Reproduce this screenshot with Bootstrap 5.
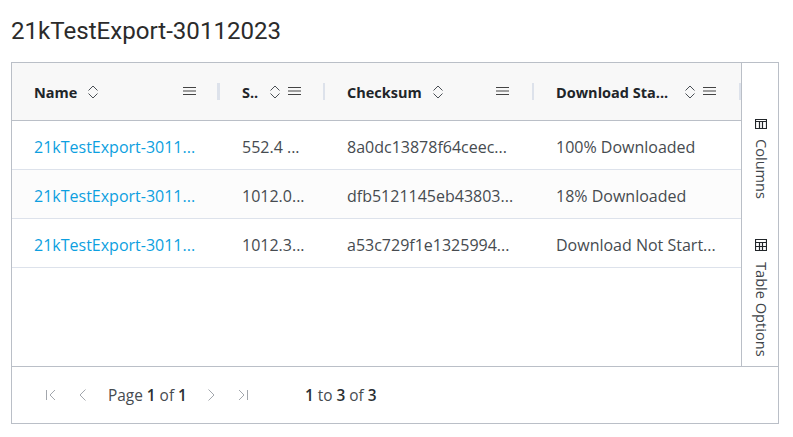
<!DOCTYPE html>
<html lang="en">
<head>
  <meta charset="UTF-8">
  <meta name="viewport" content="width=device-width, initial-scale=1.0">
  <title>21kTestExport-30112023</title>
  <link href="https://cdn.jsdelivr.net/npm/bootstrap@5.3.0/dist/css/bootstrap.min.css" rel="stylesheet">
  <style>
    body { background: #fff; color: #464b50; font-family: "Open Sans", "Noto Sans", sans-serif; }
    .page-wrap { padding: 16px 14px 13px 11px; }
    .page-title { font-family: Roboto, sans-serif; font-size: 24.1px; font-weight: 400; line-height: 30px; margin: 0 0 16px; color: #2b2b2b; }
    .grid-box { border: 1px solid #babfc7; height: 362px; }
    .grid-main { height: 304px; border-bottom: 1px solid #babfc7; }
    .grid-cols { width: 729px; overflow: hidden; }
    .grid-head { height: 58px; background: #f8f8f8; border-bottom: 1px solid #babfc7; }
    .grid-row { height: 49px; border-bottom: 1px solid #dde2eb; font-size: 16px; }
    .grid-row.odd { background: #fcfcfc; }
    .col-name { width: 208px; }
    .col-size { width: 105px; }
    .col-sum { width: 209px; }
    .col-status { width: 207px; }
    .cell { padding: 4px 0 0 22px; white-space: nowrap; line-height: 44px; flex: none; }
    .cell a { color: #0d9fe0; text-decoration: none; }
    .head-cell { padding: 1px 24px 0 22px; height: 57px; position: relative; flex: none; font-size: 14.5px; font-weight: 700; color: #212529; }
    .head-cell:nth-child(n+3) { padding-right: 25px; }
    .head-cell::after { content: ""; position: absolute; right: 0; top: 20px; width: 2px; height: 17px; background: #dde2eb; }
    .head-cell:first-child::after { width: 3px; }
    .head-label { white-space: nowrap; padding-top: 2px; }
    .sort-icon { flex: none; margin-left: 10px; }
    .menu-icon { flex: none; margin-bottom: 3px; }
    .menu-near { margin-left: 7px; }
    .side-bar { width: 37px; border-left: 1px solid #babfc7; padding-top: 55px; font-size: 14.6px; color: #40454a; }
    .side-tab { writing-mode: vertical-lr; white-space: nowrap; line-height: 24px; gap: 9px; width: 100%; }
    .side-tab + .side-tab { margin-top: 40px; gap: 11px; }
    .side-tab svg { writing-mode: horizontal-tb; margin-left: 2px; }
    .side-tab span { margin-left: 4px; }
    .grid-foot { height: 56px; padding-left: 31px; font-size: 15.4px; }
    .grid-foot span { padding-top: 2px; }
    .page-icon { width: 16px; height: 16px; color: #a3a7ad; flex: none; }
    .pager-text { margin: 0 16px 0 17px; }
    .row-count { margin-left: 54px; }
    .grid-foot b { font-weight: 600; color: #2b2f33; }
  </style>
</head>
<body>
  <div class="page-wrap">
    <h1 class="page-title">21kTestExport-30112023</h1>
    <div class="grid-box">
      <div class="grid-main d-flex">
        <div class="grid-cols flex-shrink-0">
          <div class="grid-head d-flex">
            <div class="head-cell col-name d-flex align-items-center">
              <span class="head-label">Name</span>
              <svg class="sort-icon" width="12" height="16" viewBox="0 0 12 16" fill="none" stroke="#4a4f55"><path d="M1.500 6.500 6 2l4.500 4.500M1.500 9.500 6 14l4.500-4.500"/></svg>
              <svg class="menu-icon ms-auto" width="13" height="10" viewBox="0 0 13 10" stroke="#444"><path d="M0 1.500h13M0 5h13M0 8.500h13"/></svg>
            </div>
            <div class="head-cell col-size d-flex align-items-center">
              <span class="head-label">S..</span>
              <svg class="sort-icon ms-auto" width="12" height="16" viewBox="0 0 12 16" fill="none" stroke="#4a4f55"><path d="M1.500 6.500 6 2l4.500 4.500M1.500 9.500 6 14l4.500-4.500"/></svg>
              <svg class="menu-icon menu-near" width="13" height="10" viewBox="0 0 13 10" stroke="#444"><path d="M0 1.500h13M0 5h13M0 8.500h13"/></svg>
            </div>
            <div class="head-cell col-sum d-flex align-items-center">
              <span class="head-label">Checksum</span>
              <svg class="sort-icon" width="12" height="16" viewBox="0 0 12 16" fill="none" stroke="#4a4f55"><path d="M1.500 6.500 6 2l4.500 4.500M1.500 9.500 6 14l4.500-4.500"/></svg>
              <svg class="menu-icon ms-auto" width="13" height="10" viewBox="0 0 13 10" stroke="#444"><path d="M0 1.500h13M0 5h13M0 8.500h13"/></svg>
            </div>
            <div class="head-cell col-status d-flex align-items-center">
              <span class="head-label">Download Sta...</span>
              <svg class="sort-icon ms-auto" width="12" height="16" viewBox="0 0 12 16" fill="none" stroke="#4a4f55"><path d="M1.500 6.500 6 2l4.500 4.500M1.500 9.500 6 14l4.500-4.500"/></svg>
              <svg class="menu-icon menu-near" width="13" height="10" viewBox="0 0 13 10" stroke="#444"><path d="M0 1.500h13M0 5h13M0 8.500h13"/></svg>
            </div>
          </div>
          <div class="grid-row d-flex">
            <div class="cell col-name"><a href="#">21kTestExport-3011...</a></div>
            <div class="cell col-size">552.4 ...</div>
            <div class="cell col-sum">8a0dc13878f64ceec...</div>
            <div class="cell col-status">100% Downloaded</div>
          </div>
          <div class="grid-row odd d-flex">
            <div class="cell col-name"><a href="#">21kTestExport-3011...</a></div>
            <div class="cell col-size">1012.0...</div>
            <div class="cell col-sum">dfb5121145eb43803...</div>
            <div class="cell col-status">18% Downloaded</div>
          </div>
          <div class="grid-row d-flex">
            <div class="cell col-name"><a href="#">21kTestExport-3011...</a></div>
            <div class="cell col-size">1012.3...</div>
            <div class="cell col-sum">a53c729f1e1325994...</div>
            <div class="cell col-status">Download Not Start...</div>
          </div>
        </div>
        <div class="side-bar d-flex flex-column">
          <div class="side-tab d-flex align-items-center">
            <svg width="12" height="12" viewBox="0 0 12 12" fill="none" stroke="#212529" stroke-width="1.200"><path d="M.5 1.500h11v9H.5zM.5 3.500h11M4.500 3.500v7M7.500 3.500v7"/></svg>
            <span>Columns</span>
          </div>
          <div class="side-tab d-flex align-items-center">
            <svg width="12" height="12" viewBox="0 0 12 12" fill="none" stroke="#212529" stroke-width="1.200"><path d="M.5.5h11v11H.5zM.5 3.500h11M.5 7.500h11M4.500 3.500v8M7.500 3.500v8"/></svg>
            <span>Table Options</span>
          </div>
        </div>
      </div>
      <div class="grid-foot d-flex align-items-center">
        <svg class="page-icon" viewBox="0 0 16 16" fill="none" stroke="currentColor"><path d="M3.500 3v10M12 3 7 8l5 5"/></svg>
        <svg class="page-icon ms-3" viewBox="0 0 16 16" fill="none" stroke="currentColor"><path d="M10.500 2.500 5 8l5.500 5.500"/></svg>
        <span class="pager-text">Page <b>1</b> of <b>1</b></span>
        <svg class="page-icon" viewBox="0 0 16 16" fill="none" stroke="currentColor"><path d="M5.500 2.500 11 8l-5.500 5.500"/></svg>
        <svg class="page-icon ms-3" viewBox="0 0 16 16" fill="none" stroke="currentColor"><path d="M4 3l5 5-5 5M12.500 3v10"/></svg>
        <span class="row-count"><b>1</b> to <b>3</b> of <b>3</b></span>
      </div>
    </div>
  </div>
  <script src="https://cdn.jsdelivr.net/npm/bootstrap@5.3.0/dist/js/bootstrap.bundle.min.js"></script>
</body>
</html>
